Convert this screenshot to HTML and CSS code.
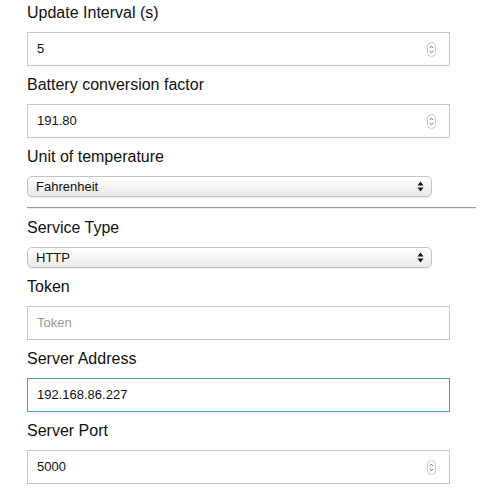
FILE: index.html
```html
<!DOCTYPE html>
<html>
<head>
<meta charset="utf-8">
<link rel="stylesheet" href="styles.css">
</head>
<body>
<form class="form">
  <div class="label">Update Interval (s)</div>
  <div class="field">
    <span class="value">5</span>
    <svg class="spin" width="9" height="15" viewBox="0 0 9 15"><rect x="0.5" y="0.5" width="8" height="14" rx="4" fill="#fff" stroke="#c9c9c9"/><path d="M2.8 6 L4.5 4.3 L6.2 6" fill="none" stroke="#555" stroke-width="0.9"/><path d="M2.8 9 L4.5 10.7 L6.2 9" fill="none" stroke="#555" stroke-width="0.9"/></svg>
  </div>
  <div class="label">Battery conversion factor</div>
  <div class="field">
    <span class="value">191.80</span>
    <svg class="spin" width="9" height="15" viewBox="0 0 9 15"><rect x="0.5" y="0.5" width="8" height="14" rx="4" fill="#fff" stroke="#c9c9c9"/><path d="M2.8 6 L4.5 4.3 L6.2 6" fill="none" stroke="#555" stroke-width="0.9"/><path d="M2.8 9 L4.5 10.7 L6.2 9" fill="none" stroke="#555" stroke-width="0.9"/></svg>
  </div>
  <div class="label">Unit of temperature</div>
  <div class="select">
    <span class="value">Fahrenheit</span>
    <svg class="arrows" width="7" height="11" viewBox="0 0 7 11"><path d="M3.5 0.5 L6.5 4.5 L0.5 4.5 Z" fill="#111"/><path d="M3.5 10.5 L6.5 6.5 L0.5 6.5 Z" fill="#111"/></svg>
  </div>
  <div class="rule"></div>
  <div class="label">Service Type</div>
  <div class="select">
    <span class="value">HTTP</span>
    <svg class="arrows" width="7" height="11" viewBox="0 0 7 11"><path d="M3.5 0.5 L6.5 4.5 L0.5 4.5 Z" fill="#111"/><path d="M3.5 10.5 L6.5 6.5 L0.5 6.5 Z" fill="#111"/></svg>
  </div>
  <div class="label">Token</div>
  <div class="field">
    <span class="value placeholder">Token</span>
  </div>
  <div class="label">Server Address</div>
  <div class="field focus">
    <span class="value">192.168.86.227</span>
  </div>
  <div class="label">Server Port</div>
  <div class="field">
    <span class="value">5000</span>
    <svg class="spin" width="9" height="15" viewBox="0 0 9 15"><rect x="0.5" y="0.5" width="8" height="14" rx="4" fill="#fff" stroke="#c9c9c9"/><path d="M2.8 6 L4.5 4.3 L6.2 6" fill="none" stroke="#555" stroke-width="0.9"/><path d="M2.8 9 L4.5 10.7 L6.2 9" fill="none" stroke="#555" stroke-width="0.9"/></svg>
  </div>
</form>
</body>
</html>
```

FILE: styles.css
```css
html, body {
  margin: 0;
  padding: 0;
  background: #fff;
}
body {
  font-family: "Liberation Sans", Arial, Helvetica, sans-serif;
  color: #111;
}
.form {
  display: flex;
  flex-direction: column;
  align-items: flex-start;
  padding: 4px 7px 0 27px;
}
.label {
  font-size: 16px;
  line-height: 18px;
  height: 18px;
  margin-bottom: 10px;
}
.field {
  box-sizing: border-box;
  width: 423px;
  height: 34px;
  border: 1px solid #c6c6c6;
  display: flex;
  align-items: center;
  justify-content: space-between;
  padding: 0 13px 0 9px;
  margin-bottom: 10px;
  font-size: 13px;
}
.field.focus {
  border-color: #4f9bab;
}
.value {
  line-height: 16px;
}
.placeholder {
  color: #9a9a9a;
}
.spin {
  display: block;
  margin-top: 1px;
}
.select {
  box-sizing: border-box;
  width: 405px;
  height: 21px;
  border: 1px solid #c4c4c4;
  border-radius: 5px;
  background: linear-gradient(#ffffff, #f4f4f4 50%, #e9e9e9);
  box-shadow: 0 1px 1px rgba(0,0,0,0.08);
  display: flex;
  align-items: center;
  justify-content: space-between;
  padding: 0 7px 0 8px;
  margin-bottom: 10px;
  font-size: 13px;
}
.arrows {
  display: block;
}
.rule {
  align-self: stretch;
  height: 1px;
  background: #9a9a9a;
  border-bottom: 1px solid #ececec;
  margin: 0 0 10px 0;
}
```
